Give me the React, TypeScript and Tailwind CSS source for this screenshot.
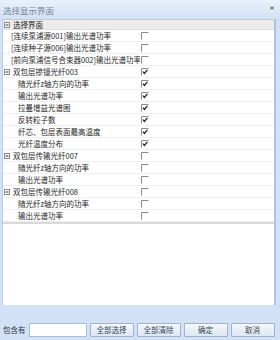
import React from "react";

type Row = { text: string; level: 1 | 2; group?: boolean; checked: boolean };

const rows: Row[] = [
  { text: "[连续泵浦源001]输出光谱功率", level: 1, checked: false },
  { text: "[连续种子源006]输出光谱功率", level: 1, checked: false },
  { text: "[前向泵浦信号合束器002]输出光谱功率", level: 1, checked: false },
  { text: "双包层掺镱光纤003", level: 1, group: true, checked: true },
  { text: "随光纤z轴方向的功率", level: 2, checked: true },
  { text: "输出光谱功率", level: 2, checked: true },
  { text: "拉曼增益光谱图", level: 2, checked: true },
  { text: "反转粒子数", level: 2, checked: true },
  { text: "纤芯、包层表面最高温度", level: 2, checked: true },
  { text: "光纤温度分布", level: 2, checked: true },
  { text: "双包层传输光纤007", level: 1, group: true, checked: false },
  { text: "随光纤z轴方向的功率", level: 2, checked: false },
  { text: "输出光谱功率", level: 2, checked: false },
  { text: "双包层传输光纤008", level: 1, group: true, checked: false },
  { text: "随光纤z轴方向的功率", level: 2, checked: false },
  { text: "输出光谱功率", level: 2, checked: false },
];

function Minus() {
  return (
    <svg width="6" height="6" viewBox="0 0 6 6" className="shrink-0">
      <rect x="0.5" y="0.5" width="5" height="5" fill="#fff" stroke="#8c8c8c" />
      <path d="M1.5 3 H4.5" stroke="#333" strokeWidth="1" />
    </svg>
  );
}

function Check({ checked }: { checked: boolean }) {
  return (
    <svg width="8" height="8" viewBox="0 0 8 8">
      <path d="M0.5 7.5 V0.5 H7.5" fill="none" stroke="#8a8a8a" strokeWidth="1" />
      {checked && (
        <path d="M2 3.6 L3.4 5.4 L6.4 1.8" fill="none" stroke="#222" strokeWidth="1.3" />
      )}
    </svg>
  );
}

function Btn({ children }: { children: React.ReactNode }) {
  return (
    <button className="w-[44px] h-[14px] border border-[#9fb3cc] rounded-[1px] bg-gradient-to-b from-[#f5f8fc] to-[#dde7f3] text-[7.5px] leading-[12px] text-[#34465c] flex items-center justify-center">
      {children}
    </button>
  );
}

export default function App() {
  return (
    <div className="w-[280px] h-[340px] bg-[#d2e1f5] flex flex-col font-['Noto_Sans_CJK_SC',sans-serif] overflow-hidden">
      <div className="h-[19px] shrink-0 flex items-center pl-[3px] pr-[6px] bg-gradient-to-b from-[#e8f0fb] to-[#d2e1f6] text-[8.5px] leading-[12px] text-[#74849a]">
        <span>选择显示界面</span>
        <svg width="4" height="4" viewBox="0 0 4 4" className="ml-auto mt-[-3px]">
          <path d="M0.5 0.5 L3.5 3.5 M3.5 0.5 L0.5 3.5" stroke="#555" strokeWidth="1" />
        </svg>
      </div>
      <div className="ml-[2px] mr-[4px] h-[286px] shrink-0 bg-white border-l border-[#b9cce6] border-r-[2px] border-r-[#aac3e6] flex flex-col text-[7.5px] text-[#262626] leading-[11px]">
        <div className="h-[11px] shrink-0 bg-[#ececec] border-t border-[#c9c9c9] border-b border-b-[#e0e0e0] flex items-center pl-[1px]">
          <Minus />
          <span className="ml-[3px]">选择界面</span>
        </div>
        {rows.map((r, i) => (
          <div key={i} className="h-[12px] shrink-0 flex items-center border-b border-[#efefef]">
            <div className="w-[137px] h-[11px] shrink-0 flex items-center overflow-hidden whitespace-nowrap pl-[1px]">
              {r.level === 1 && r.group && (
                <>
                  <Minus />
                  <span className="ml-[3px]">{r.text}</span>
                </>
              )}
              {r.level === 1 && !r.group && <span className="ml-[7px]">{r.text}</span>}
              {r.level === 2 && <span className="ml-[14px]">{r.text}</span>}
            </div>
            <div className="ml-[1px] flex items-center">
              <Check checked={r.checked} />
            </div>
          </div>
        ))}
        <div className="h-[2px] shrink-0 bg-[#d9d9d9]" />
      </div>
      <div className="flex-1 flex items-end pb-[3px] pl-[3px] gap-[3px] text-[7.5px] leading-[12px]">
        <span className="text-[#2f3a48] mb-[1px]">包含有</span>
        <div className="w-[58px] h-[14px] bg-white border border-[#a9bdd6]" />
        <Btn>全部选择</Btn>
        <Btn>全部清除</Btn>
        <Btn>确定</Btn>
        <Btn>取消</Btn>
      </div>
    </div>
  );
}
